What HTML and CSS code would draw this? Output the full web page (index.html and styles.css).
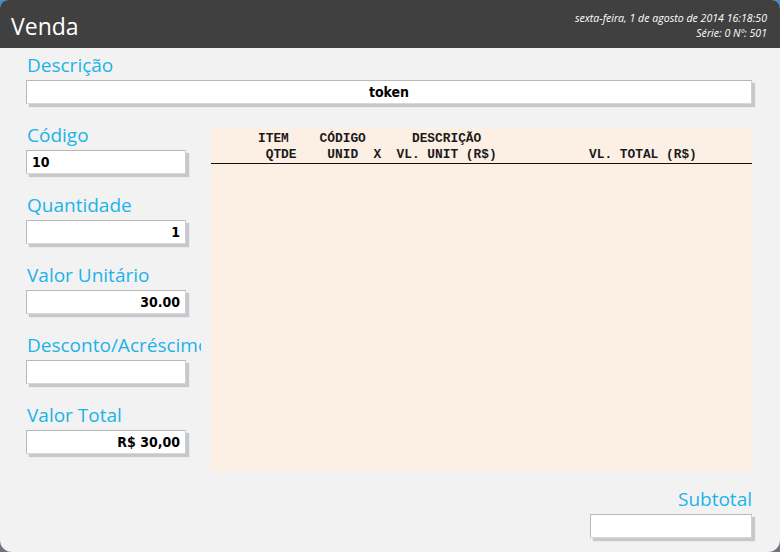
FILE: index.html
```html
<!DOCTYPE html>
<html lang="pt">
<head>
<meta charset="utf-8">
<title>Venda</title>
<link rel="stylesheet" href="styles.css">
</head>
<body>
<div class="window">
  <header class="titlebar">
    <h1 class="title">Venda</h1>
    <div class="meta">
      <div>sexta-feira, 1 de agosto de 2014 16:18:50</div>
      <div>Série: 0 Nº: 501</div>
    </div>
  </header>
  <main class="content">
    <section class="field">
      <label class="label">Descrição</label>
      <div class="box center">token</div>
    </section>
    <div class="main-row">
      <div class="left-col">
        <section class="field">
          <label class="label">Código</label>
          <div class="box small left">10</div>
        </section>
        <section class="field">
          <label class="label">Quantidade</label>
          <div class="box small right">1</div>
        </section>
        <section class="field">
          <label class="label">Valor Unitário</label>
          <div class="box small right">30.00</div>
        </section>
        <section class="field">
          <label class="label">Desconto/Acréscimo</label>
          <div class="box small right"></div>
        </section>
        <section class="field">
          <label class="label">Valor Total</label>
          <div class="box small right">R$ 30,00</div>
        </section>
      </div>
      <div class="receipt">
        <pre class="receipt-head">ITEM    CÓDIGO      DESCRIÇÃO
 QTDE    UNID  X  VL. UNIT (R$)            VL. TOTAL (R$)</pre>
      </div>
    </div>
    <section class="subtotal">
      <label class="label">Subtotal</label>
      <div class="box small sub right"></div>
    </section>
  </main>
</div>
</body>
</html>
```

FILE: styles.css
```css
html, body {
  margin: 0;
  padding: 0;
  width: 780px;
  height: 552px;
  overflow: hidden;
  background: linear-gradient(#3b8fd8 0, #3b8fd8 50%, #6c7480 50%, #6c7480 100%);
}

.window {
  width: 780px;
  height: 552px;
  background: #f2f2f2;
  border-radius: 8px 8px 12px 12px;
  overflow: hidden;
  display: flex;
  flex-direction: column;
}

.titlebar {
  height: 48px;
  flex: 0 0 48px;
  background: #404040;
  display: flex;
  justify-content: space-between;
  align-items: flex-start;
  color: #fff;
}

.title {
  margin: 0;
  padding: 11px 0 0 11px;
  font-family: "Open Sans", sans-serif;
  font-weight: 400;
  font-size: 23px;
  line-height: 30px;
}

.meta {
  padding: 11px 13px 0 0;
  text-align: right;
  font-family: "Open Sans", sans-serif;
  font-style: italic;
  font-size: 10.6px;
  line-height: 15px;
}

.content {
  padding: 6px 28px 0 26px;
  display: flex;
  flex-direction: column;
}

.field {
  display: flex;
  flex-direction: column;
}

.label {
  display: block;
  font-family: "Open Sans", sans-serif;
  font-size: 19px;
  line-height: 22px;
  padding-bottom: 4px;
  color: #1cb2ea;
  white-space: nowrap;
  padding-left: 1px;
}

.box {
  height: 22px;
  background: #fff;
  border: 1px solid #b8b8b8;
  border-right-color: #d0d0d0;
  border-bottom-color: #d8d8d8;
  box-shadow: 3px 3px 1px #c6c8cc;
  font-family: "DejaVu Sans Condensed", "DejaVu Sans", sans-serif;
  font-weight: bold;
  font-size: 14px;
  line-height: 22px;
  color: #000;
  padding: 0 5px;
  box-sizing: content-box;
}

.box.center { text-align: center; }
.box.left { text-align: left; }
.box.right { text-align: right; }
.box.small { width: 148px; }
.box.sub { width: 150px; }

.main-row {
  display: flex;
  margin-top: 14px;
  gap: 10px;
}

.left-col {
  width: 175px;
  flex: 0 0 175px;
  overflow: hidden;
  display: flex;
  flex-direction: column;
  gap: 20px;
  padding-top: 6px;
  padding-bottom: 4px;
}

.receipt {
  flex: 1;
  margin-top: 9px;
  height: 345px;
  background: #fcf0e4;
}

.receipt-head {
  margin: 0;
  padding: 4px 0 0 47px;
  height: 37px;
  box-sizing: border-box;
  border-bottom: 1px solid #111;
  font-family: "Liberation Mono", monospace;
  font-weight: bold;
  font-size: 12.83px;
  line-height: 16px;
  color: #1a1a1a;
}

.subtotal {
  align-self: flex-end;
  display: flex;
  flex-direction: column;
  align-items: flex-end;
  margin-top: 16px;
}
```
